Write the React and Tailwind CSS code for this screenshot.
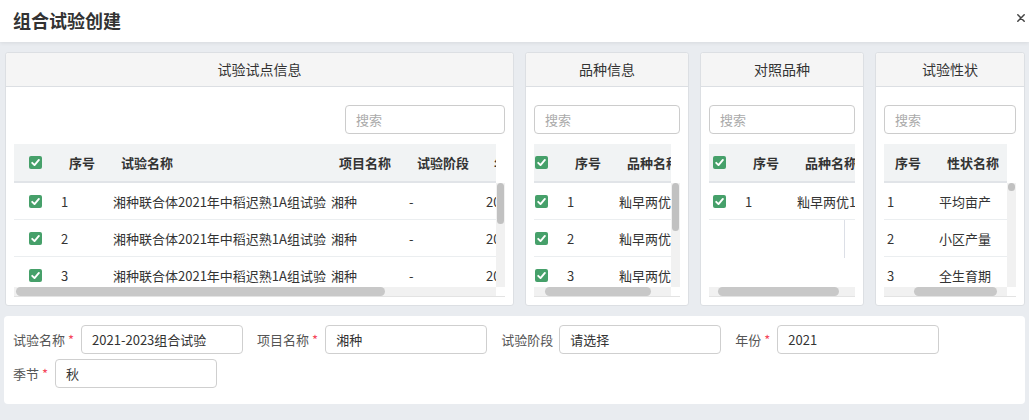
import React from 'react';

function Check() {
  return (
    <span className="inline-flex w-[13px] h-[13px] rounded-[2px] bg-[#46a06a] items-center justify-center shrink-0">
      <svg width="11" height="11" viewBox="0 0 11 11">
        <path d="M2.2 5.8 L4.5 8.1 L8.9 2.9" stroke="white" strokeWidth="1.9" fill="none" strokeLinecap="round" strokeLinejoin="round" />
      </svg>
    </span>
  );
}

function HeadCell({ c }) {
  return (
    <div className={`${c.w} shrink-0 flex items-center ${c.check ? 'pl-[15px]' : 'pl-[17px]'}`}>
      {c.check ? <Check /> : <span className="font-bold whitespace-nowrap text-[13px] text-[#333] leading-none">{c.label}</span>}
    </div>
  );
}

function BodyCell({ c, v }) {
  return (
    <div className={`${c.w} shrink-0 flex items-center ${c.check ? 'pl-[15px]' : 'pl-[9px]'}`}>
      {c.check ? <Check /> : <span className="whitespace-nowrap text-[13px] text-[#333] leading-none">{v}</span>}
    </div>
  );
}

function DataTable({ cols, rows, shift, vThumb, hThumb, extra }) {
  const hasV = !!vThumb;
  return (
    <div className="w-full">
      <div className="flex">
        <div className="flex-1 min-w-0 overflow-hidden h-[39px] bg-[#f1f3f4] border-b-2 border-[#e1e4e8]">
          <div className={`flex h-full ${shift}`}>
            {cols.map((c, i) => (
              <HeadCell key={i} c={c} />
            ))}
          </div>
        </div>
        {hasV && <div className="w-[9px] shrink-0" />}
      </div>
      <div className="flex h-[104px]">
        <div className="flex-1 min-w-0 overflow-hidden">
          {rows.map((r, i) => (
            <div key={i} className={`flex h-[37px] border-b border-[#ebeef0] ${shift}`}>
              {cols.map((c, j) => (
                <BodyCell key={j} c={c} v={r[j]} />
              ))}
            </div>
          ))}
          {extra}
        </div>
        {hasV && (
          <div className="w-[9px] shrink-0 bg-[#f1f1f1]">
            <div className={`${vThumb} ml-[1px] w-[7px] rounded-full bg-[#c1c1c1]`} />
          </div>
        )}
      </div>
      <div className="flex h-[9px]">
        <div className="flex-1 min-w-0 bg-[#f1f1f1] flex">
          <div className={`${hThumb} h-full rounded-full bg-[#c8c8c8]`} />
        </div>
        {hasV && <div className="w-[9px] shrink-0" />}
      </div>
      <div className="h-px bg-[#e3e3e3]" />
    </div>
  );
}

function Panel({ w, title, searchW, children }) {
  return (
    <div className={`${w} h-[254px] shrink-0 bg-white border border-[#dcdfe3] rounded-[3px] flex flex-col`}>
      <div className="h-[34px] bg-[#f5f5f5] border-b border-[#dcdfe3] rounded-t-[3px] flex items-center justify-center text-[14px] text-[#333]">
        {title}
      </div>
      <div className="px-[8px] pt-[18px]">
        <div className="flex justify-end">
          <div className={`${searchW} h-[29px] border border-[#cccccc] rounded-[4px] flex items-center pl-[10px] text-[13px] text-[#aaaaaa]`}>
            搜索
          </div>
        </div>
        <div className="mt-[10px]">{children}</div>
      </div>
    </div>
  );
}

function Field({ label, req, value, last }) {
  return (
    <div className={`flex items-center ${last ? '' : 'mr-[14px]'}`}>
      <span className="text-[13px] text-[#555] leading-none">{label}</span>
      {req && <span className="text-[13px] text-[#f5475b] ml-[3px] leading-none">*</span>}
      <div className={`${req ? 'ml-[7px]' : 'ml-[6px]'} w-[162px] h-[29px] border border-[#cfcfcf] rounded-[4px] flex items-center pl-[10px] text-[13px] text-[#333]`}>
        {value}
      </div>
    </div>
  );
}

export default function App() {
  const name = '湘种联合体2021年中稻迟熟1A组试验';
  const p1cols = [
    { w: 'w-[38px]', check: true },
    { w: 'w-[52px]', label: '序号' },
    { w: 'w-[218px]', label: '试验名称' },
    { w: 'w-[78px]', label: '项目名称' },
    { w: 'w-[77px]', label: '试验阶段' },
    { w: 'w-[100px]', label: '年份' },
  ];
  const p1rows = [
    [null, '1', name, '湘种', '-', '2021'],
    [null, '2', name, '湘种', '-', '2021'],
    [null, '3', name, '湘种', '-', '2021'],
  ];
  const varCols = [
    { w: 'w-[38px]', check: true },
    { w: 'w-[52px]', label: '序号' },
    { w: 'w-[140px]', label: '品种名称' },
  ];
  const p2rows = [
    [null, '1', '籼早两优336'],
    [null, '2', '籼早两优4号'],
    [null, '3', '籼早两优1号'],
  ];
  const p3rows = [[null, '1', '籼早两优1号']];
  const p4cols = [
    { w: 'w-[52px]', label: '序号' },
    { w: 'w-[100px]', label: '性状名称' },
  ];
  const p4rows = [
    ['1', '平均亩产'],
    ['2', '小区产量'],
    ['3', '全生育期'],
  ];

  return (
    <div className="w-[1029px] h-[420px] overflow-hidden bg-[#e9ecf0] font-['Noto_Sans_CJK_SC',sans-serif]">
      <div className="relative z-10 h-[42px] bg-white flex justify-between shadow-[0_1px_4px_rgba(0,0,0,0.08)]">
        <div className="pl-[13px] flex items-center h-full text-[18px] font-bold text-[#333] leading-none pb-[2px]">组合试验创建</div>
        <div className="pt-[14px] pr-[4px]">
          <svg width="8" height="8" viewBox="0 0 8 8">
            <path d="M0.8 0.8 L7.2 7.2 M7.2 0.8 L0.8 7.2" stroke="#444" strokeWidth="1.5" strokeLinecap="round" />
          </svg>
        </div>
      </div>

      <div className="flex gap-[11px] pl-[5px] pt-[10px]">
        <Panel w="w-[509px]" title="试验试点信息" searchW="w-[160px]">
          <DataTable cols={p1cols} rows={p1rows} shift="" vThumb="h-[41px]" hThumb="ml-[2px] w-[369px]" />
        </Panel>
        <Panel w="w-[164px]" title="品种信息" searchW="w-full">
          <DataTable cols={varCols} rows={p2rows} shift="ml-[-14px]" vThumb="h-[48px]" hThumb="ml-[11px] w-[106px]" />
        </Panel>
        <Panel w="w-[164px]" title="对照品种" searchW="w-full">
          <DataTable
            cols={varCols}
            rows={p3rows}
            shift="ml-[-11px]"
            hThumb="ml-[9px] w-[121px]"
            extra={<div className="w-[136px] h-[38px] border-r border-[#dcdfe6]" />}
          />
        </Panel>
        <Panel w="w-[150px]" title="试验性状" searchW="w-full">
          <DataTable cols={p4cols} rows={p4rows} shift="ml-[-6px]" vThumb="h-[8px]" hThumb="ml-[30px] w-[83px]" />
        </Panel>
      </div>

      <div className="ml-[4px] mt-[10px] w-[1021px] h-[88px] bg-white rounded-[4px] pl-[9px] pt-[9px] flex flex-col gap-[5px]">
        <div className="flex items-center">
          <Field label="试验名称" req value="2021-2023组合试验" />
          <Field label="项目名称" req value="湘种" />
          <Field label="试验阶段" value="请选择" />
          <Field label="年份" req value="2021" last />
        </div>
        <div className="flex items-center">
          <Field label="季节" req value="秋" last />
        </div>
      </div>
    </div>
  );
}
